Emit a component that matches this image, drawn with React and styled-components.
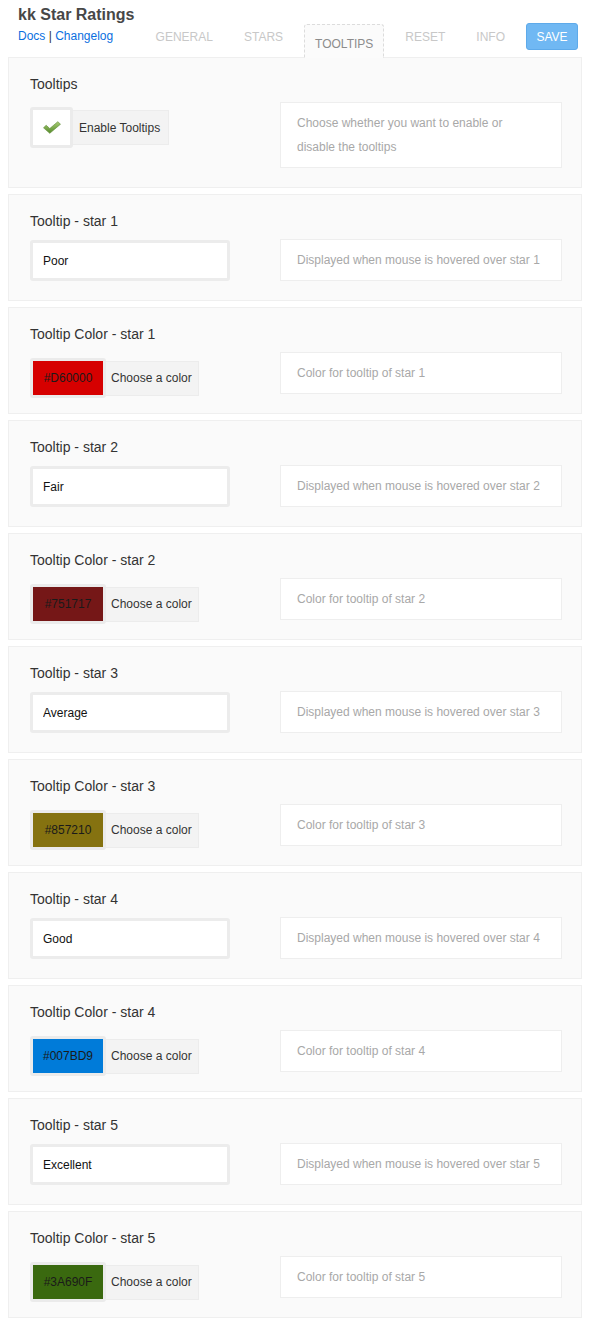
import React from 'react';
import styled, { createGlobalStyle } from 'styled-components';

const GlobalStyle = createGlobalStyle`
  body {
    margin: 0;
    background: #ffffff;
    font-family: "Liberation Sans", Arial, sans-serif;
  }
`;

const TABS = ['General', 'Stars', 'Tooltips', 'Reset', 'Info'];

const STARS = [
  { label: 'Poor', color: '#D60000' },
  { label: 'Fair', color: '#751717' },
  { label: 'Average', color: '#857210' },
  { label: 'Good', color: '#007BD9' },
  { label: 'Excellent', color: '#3A690F' },
];

const CheckMark = () => (
  <svg width="18" height="13" viewBox="0 0 17 12">
    <defs>
      <linearGradient id="chk" x1="0" y1="0" x2="0" y2="1">
        <stop offset="0" stopColor="#a9cd74" />
        <stop offset="1" stopColor="#548a2a" />
      </linearGradient>
    </defs>
    <path
      d="M0.5 6.3 L3 3.9 L6.4 7 L14 0.5 L16.5 2.9 L6.4 11.5 Z"
      fill="url(#chk)"
      stroke="#5f8c38"
      strokeWidth="0.6"
      strokeLinejoin="round"
    />
  </svg>
);

const App = () => {
  return (
    <Page>
      <GlobalStyle />
      <Header>
        <Brand>
          <Title>kk Star Ratings</Title>
          <Links>
            <Link>Docs</Link> | <Link>Changelog</Link>
          </Links>
        </Brand>
        <Nav>
          {TABS.map((t) => (
            <Tab key={t} $active={t === 'Tooltips'}>
              {t}
            </Tab>
          ))}
          <SaveButton>Save</SaveButton>
        </Nav>
      </Header>

      <Stack>
        <Card>
          <FieldLabel>Tooltips</FieldLabel>
          <Row>
            <Checkbox>
              <CheckBoxSquare>
                <CheckMark />
              </CheckBoxSquare>
              <CheckLabel>Enable Tooltips</CheckLabel>
            </Checkbox>
            <Description>
              Choose whether you want to enable or
              <br />
              disable the tooltips
            </Description>
          </Row>
        </Card>

        {STARS.map((star, i) => (
          <React.Fragment key={star.color}>
            <Card>
              <FieldLabel>Tooltip - star {i + 1}</FieldLabel>
              <Row>
                <TextInput defaultValue={star.label} />
                <Description>Displayed when mouse is hovered over star {i + 1}</Description>
              </Row>
            </Card>
            <Card>
              <FieldLabel>Tooltip Color - star {i + 1}</FieldLabel>
              <Row>
                <Picker>
                  <Swatch $color={star.color}>{star.color}</Swatch>
                  <PickerLabel>Choose a color</PickerLabel>
                </Picker>
                <Description>Color for tooltip of star {i + 1}</Description>
              </Row>
            </Card>
          </React.Fragment>
        ))}
      </Stack>
    </Page>
  );
};

const Page = styled.div`
  padding: 0 8px 8px;
`;

const Header = styled.header`
  display: flex;
  align-items: flex-end;
  justify-content: space-between;
  height: 57px;
  padding: 0 4px 0 10px;
`;

const Brand = styled.div`
  align-self: stretch;
  display: flex;
  flex-direction: column;
  padding-top: 6px;
`;

const Title = styled.h1`
  margin: 0;
  font-size: 16px;
  line-height: 18px;
  font-weight: bold;
  color: #474747;
`;

const Links = styled.div`
  margin-top: 5px;
  font-size: 12px;
  line-height: 14px;
  color: #333;
`;

const Link = styled.a`
  color: #0a6fe0;
  cursor: pointer;
`;

const Nav = styled.nav`
  display: flex;
  align-items: flex-end;
  gap: 11px;
`;

const Tab = styled.div`
  position: relative;
  z-index: 1;
  box-sizing: border-box;
  padding: ${(p) => (p.$active ? '12px 10px 0' : '0 10px')};
  height: ${(p) => (p.$active ? '34px' : '26px')};
  line-height: ${(p) => (p.$active ? '14px' : '26px')};
  margin-bottom: ${(p) => (p.$active ? '-1px' : '7px')};
  font-size: 12px;
  text-transform: uppercase;
  color: ${(p) => (p.$active ? '#8c8c8c' : '#c8c8c8')};
  background: ${(p) => (p.$active ? '#fbfbfb' : 'transparent')};
  border: ${(p) => (p.$active ? '1px dashed #dcdcdc' : '0')};
  border-bottom: 0;
  border-radius: 3px 3px 0 0;
  cursor: pointer;
`;

const SaveButton = styled.button`
  box-sizing: border-box;
  width: 52px;
  height: 27px;
  margin-bottom: 7px;
  padding: 0;
  font-family: inherit;
  font-size: 12px;
  text-transform: uppercase;
  color: #fff;
  background: #70b8f3;
  border: 1px solid #5eaaea;
  border-radius: 3px;
  cursor: pointer;
`;

const Stack = styled.div`
  display: flex;
  flex-direction: column;
  gap: 6px;
`;

const Card = styled.section`
  background: #fafafa;
  border: 1px solid #efefef;
  padding: 18px 19px 19px 21px;
`;

const FieldLabel = styled.div`
  font-size: 14px;
  line-height: 16px;
  color: #333;
  margin-bottom: 10px;
`;

const Row = styled.div`
  display: flex;
  align-items: flex-start;
  gap: 50px;
`;

const TextInput = styled.input`
  box-sizing: border-box;
  width: 200px;
  height: 41px;
  margin-top: 1px;
  padding: 0 10px;
  font-family: inherit;
  font-size: 12px;
  color: #111;
  background: #fff;
  border: 3px solid #ececec;
  border-radius: 3px;
  outline: none;
`;

const Description = styled.div`
  flex: 1;
  padding: 8px 16px;
  font-size: 12px;
  line-height: 24px;
  color: #a8a8a8;
  background: #fff;
  border: 1px solid #eeeeee;
`;

const Checkbox = styled.label`
  display: flex;
  align-items: center;
  width: 200px;
  margin-top: 5px;
`;

const CheckBoxSquare = styled.span`
  box-sizing: border-box;
  display: flex;
  align-items: center;
  justify-content: center;
  width: 43px;
  height: 41px;
  background: #fff;
  border: 3px solid #ebebeb;
  border-radius: 3px;
`;

const CheckLabel = styled.span`
  box-sizing: border-box;
  display: flex;
  align-items: center;
  height: 35px;
  padding: 0 8px 0 6px;
  font-size: 12px;
  color: #333;
  background: #f3f3f3;
  border: 1px solid #ececec;
  border-left: 0;
`;

const Picker = styled.div`
  display: flex;
  align-items: center;
  width: 200px;
  margin: 6px 0 -4px;
`;

const Swatch = styled.span`
  box-sizing: border-box;
  display: flex;
  align-items: center;
  justify-content: center;
  width: 76px;
  height: 40px;
  font-size: 12px;
  color: #1a1a1a;
  background: ${(p) => p.$color};
  border: 3px solid #ebebeb;
  border-radius: 3px;
`;

const PickerLabel = styled.span`
  box-sizing: border-box;
  display: flex;
  align-items: center;
  height: 35px;
  padding: 0 6px 0 5px;
  font-size: 12px;
  color: #333;
  background: #f3f3f3;
  border: 1px solid #ececec;
  border-left: 0;
`;

export default App;
